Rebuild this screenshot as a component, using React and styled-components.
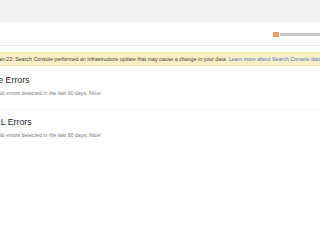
import React from 'react';
import styled, { createGlobalStyle } from 'styled-components';

const Global = createGlobalStyle`
    html, body {
        margin: 0;
        padding: 0;
        background: #fff;
        overflow: hidden;
    }
    body {
        width: 320px;
        height: 240px;
        font-family: Arial, "Liberation Sans", sans-serif;
    }
`;

const TopBand = styled.div`
    height: 22px;
    background: #f1f1f1;
`;

const Header = styled.div`
    height: 23px;
    border-bottom: 1px solid #ececec;
    display: flex;
    align-items: center;
    justify-content: flex-end;
`;

const Account = styled.div`
    display: flex;
    align-items: center;
    gap: 1px;
    margin-right: -14px;
    margin-top: 2px;
    filter: blur(0.7px);
`;

const Avatar = styled.span`
    width: 6px;
    height: 5px;
    background: #f39a5e;
`;

const BlurName = styled.span`
    width: 54px;
    height: 3px;
    background: #c4c4c4;
`;

const Page = styled.div`
    margin-left: -12px;
    width: 380px;
`;

const Banner = styled.div`
    margin-top: 6px;
    margin-left: 9px;
    height: 14px;
    box-sizing: border-box;
    background: #f9efc4;
    border-top: 1px solid #f3e2a2;
    border-bottom: 1px solid #f3e2a2;
    display: flex;
    align-items: center;
    white-space: nowrap;
    font-size: 5.3px;
    color: #3d3d3d;
`;

const BannerText = styled.span`
    margin-left: -1px;
`;

const Link = styled.a`
    color: #4a74c4;
    text-decoration: none;
`;

const Section = styled.section`
    padding: ${(p) => p.$top}px 0 0;
    height: ${(p) => p.$h}px;
    box-sizing: border-box;
    border-bottom: ${(p) => (p.$divider ? '1px solid #f1f1f1' : 'none')};
`;

const Title = styled.h2`
    margin: 0;
    font-size: 8.8px;
    font-weight: normal;
    color: #262626;
    line-height: 10px;
`;

const Note = styled.p`
    margin: 5px 0 0 10px;
    font-size: 5.3px;
    color: #777;
    line-height: 6px;
`;

const sections = [
    { title: 'Site Errors', top: 9, h: 44, divider: true },
    { title: 'URL Errors', top: 7, h: 40, divider: false },
];

export default function App() {
    return (
        <>
            <Global />
            <TopBand />
            <Header>
                <Account>
                    <Avatar />
                    <BlurName />
                </Account>
            </Header>
            <Page>
                <Banner>
                    <BannerText>
                        Jan-22: Search Console performed an infrastructure update that may cause a change in your data.{' '}
                        <Link>Learn more about Search Console data</Link>
                    </BannerText>
                </Banner>
                {sections.map((s, i) => (
                    <Section key={i} $top={s.top} $h={s.h} $divider={s.divider}>
                        <Title>{s.title}</Title>
                        <Note>No errors detected in the last 90 days. Nice!</Note>
                    </Section>
                ))}
            </Page>
        </>
    );
}
